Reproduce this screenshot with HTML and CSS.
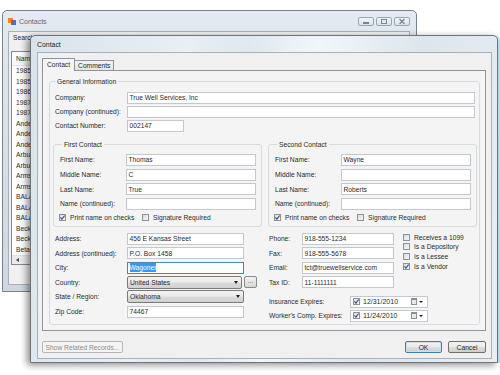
FILE: index.html
```html
<!DOCTYPE html>
<html lang="en">
<head>
  <meta charset="UTF-8" />
  <title>Contact</title>
  <link rel="stylesheet" href="styles.css">
</head>
<body>
<div class="desktop">

  <!-- list window behind the dialog -->
  <div class="window contacts-win">
    <div class="titlebar">
      <svg class="app-icon" viewBox="0 0 8 8" width="8" height="8">
        <rect x="0" y="1" width="5" height="5" fill="#e8892c"/>
        <rect x="3" y="3" width="5" height="5" fill="#3f78c4"/>
        <rect x="3" y="3" width="2" height="3" fill="#c44a3a"/>
      </svg>
      <span class="title">Contacts</span>
      <div class="caption-btns">
        <span class="cap-btn"><svg viewBox="0 0 16 9" width="16" height="9"><rect x="5" y="5" width="6" height="2" fill="#7b848d"/></svg></span>
        <span class="cap-btn"><svg viewBox="0 0 16 9" width="16" height="9"><rect x="5.5" y="2.5" width="5" height="4" fill="none" stroke="#7b848d"/></svg></span>
        <span class="cap-btn"><svg viewBox="0 0 16 9" width="16" height="9"><path d="M5.5 2 L10.5 7 M10.5 2 L5.5 7" stroke="#7b848d" stroke-width="1.3"/></svg></span>
      </div>
    </div>
    <div class="client">
      <div class="search-label">Search For:</div>
      <div class="listview">
        <div class="list-head">Name</div>
        <div class="list-row">1985 Ltd</div>
        <div class="list-row">1985 LP</div>
        <div class="list-row">1986 LP</div>
        <div class="list-row">1987 Ltd</div>
        <div class="list-row">1987 LP</div>
        <div class="list-row">Anders</div>
        <div class="list-row">Anderson</div>
        <div class="list-row">Andes</div>
        <div class="list-row">Arbuckle</div>
        <div class="list-row">Arbuck</div>
        <div class="list-row">Armstrong</div>
        <div class="list-row">Armst</div>
        <div class="list-row">BALAKO</div>
        <div class="list-row">BALAN</div>
        <div class="list-row">BALAR</div>
        <div class="list-row">Beckham</div>
        <div class="list-row">Beckley</div>
        <div class="list-row">Beta Oil</div>
        <div class="hscroll"><span class="scroll-arrow"></span></div>
      </div>
    </div>
  </div>

  <!-- contact dialog -->
  <div class="window dialog">
    <div class="titlebar">
      <span class="title">Contact</span>
    </div>
    <div class="client">
      <div class="tabs">
        <div class="tab active">Contact</div>
        <div class="tab">Comments</div>
      </div>

      <div class="tab-page">
        <div class="group general">
          <div class="caption">General Information</div>

          <div class="row">
            <span class="lbl gen">Company:</span>
            <div class="textbox w-full">True Well Services, Inc</div>
          </div>
          <div class="row">
            <span class="lbl gen">Company (continued):</span>
            <div class="textbox w-full"></div>
          </div>
          <div class="row">
            <span class="lbl gen">Contact Number:</span>
            <div class="textbox w-num">002147</div>
          </div>

          <div class="contact-groups">
            <div class="group person">
              <div class="caption">First Contact</div>
              <div class="row tall"><span class="lbl name">First Name:</span><div class="textbox w-name">Thomas</div></div>
              <div class="row tall"><span class="lbl name">Middle Name:</span><div class="textbox w-name">C</div></div>
              <div class="row tall"><span class="lbl name">Last Name:</span><div class="textbox w-name">True</div></div>
              <div class="row tall"><span class="lbl name">Name (continued):</span><div class="textbox w-name"></div></div>
              <div class="check-row">
                <span class="check print"><span class="box checked"><svg viewBox="0 0 7 7" width="7" height="7"><path d="M1.4 3.4 L2.9 5.2 L5.7 1.5" fill="none" stroke="#3b5597" stroke-width="1.2"/></svg></span>Print name on checks</span>
                <span class="check"><span class="box"></span>Signature Required</span>
              </div>
            </div>

            <div class="group person">
              <div class="caption">Second Contact</div>
              <div class="row tall"><span class="lbl name">First Name:</span><div class="textbox w-name">Wayne</div></div>
              <div class="row tall"><span class="lbl name">Middle Name:</span><div class="textbox w-name"></div></div>
              <div class="row tall"><span class="lbl name">Last Name:</span><div class="textbox w-name">Roberts</div></div>
              <div class="row tall"><span class="lbl name">Name (continued):</span><div class="textbox w-name"></div></div>
              <div class="check-row">
                <span class="check print"><span class="box checked"><svg viewBox="0 0 7 7" width="7" height="7"><path d="M1.4 3.4 L2.9 5.2 L5.7 1.5" fill="none" stroke="#3b5597" stroke-width="1.2"/></svg></span>Print name on checks</span>
                <span class="check"><span class="box"></span>Signature Required</span>
              </div>
            </div>
          </div>

          <div class="lower">
            <div class="address">
              <div class="row tall"><span class="lbl gen">Address:</span><div class="textbox w-addr">456 E Kansas Street</div></div>
              <div class="row tall"><span class="lbl gen">Address (continued):</span><div class="textbox w-addr">P.O. Box 1458</div></div>
              <div class="row tall"><span class="lbl gen">City:</span><div class="textbox w-addr focused"><span class="selected">Wagoner</span></div></div>
              <div class="row tall">
                <span class="lbl gen">Country:</span>
                <div class="combo w-country">United States<span class="drop"></span></div>
                <div class="dots">...</div>
              </div>
              <div class="row tall"><span class="lbl gen">State / Region:</span><div class="combo w-addr">Oklahoma<span class="drop"></span></div></div>
              <div class="row tall"><span class="lbl gen">Zip Code:</span><div class="textbox w-addr">74467</div></div>
            </div>

            <div class="side">
              <div class="phones">
                <div class="phone-fields">
                  <div class="row tall"><span class="lbl ph">Phone:</span><div class="textbox w-phone">918-555-1234</div></div>
                  <div class="row tall"><span class="lbl ph">Fax:</span><div class="textbox w-phone">918-555-5678</div></div>
                  <div class="row tall"><span class="lbl ph">Email:</span><div class="textbox w-phone">tct@truewellservice.com</div></div>
                  <div class="row tall"><span class="lbl ph">Tax ID:</span><div class="textbox w-phone">11-1111111</div></div>
                </div>
                <div class="flags">
                  <span class="check"><span class="box"></span>Receives a 1099</span>
                  <span class="check"><span class="box"></span>Is a Depository</span>
                  <span class="check"><span class="box"></span>Is a Lessee</span>
                  <span class="check"><span class="box checked"><svg viewBox="0 0 7 7" width="7" height="7"><path d="M1.4 3.4 L2.9 5.2 L5.7 1.5" fill="none" stroke="#3b5597" stroke-width="1.2"/></svg></span>Is a Vendor</span>
                </div>
              </div>

              <div class="dates">
                <div class="row">
                  <span class="lbl exp">Insurance Expires:</span>
                  <div class="datepick">
                    <span class="box checked"><svg viewBox="0 0 7 7" width="7" height="7"><path d="M1.4 3.4 L2.9 5.2 L5.7 1.5" fill="none" stroke="#3b5597" stroke-width="1.2"/></svg></span>
                    <span class="date">12/31/2010</span>
                    <span class="cal"></span><span class="drop"></span>
                  </div>
                </div>
                <div class="row">
                  <span class="lbl exp">Worker's Comp. Expires:</span>
                  <div class="datepick">
                    <span class="box checked"><svg viewBox="0 0 7 7" width="7" height="7"><path d="M1.4 3.4 L2.9 5.2 L5.7 1.5" fill="none" stroke="#3b5597" stroke-width="1.2"/></svg></span>
                    <span class="date">11/24/2010</span>
                    <span class="cal"></span><span class="drop"></span>
                  </div>
                </div>
              </div>
            </div>
          </div>
        </div>
      </div>

      <div class="footer">
        <button class="btn related" disabled>Show Related Records...</button>
        <div class="spacer"></div>
        <button class="btn ok">OK</button>
        <button class="btn cancel">Cancel</button>
      </div>
    </div>
  </div>

</div>
</body>
</html>
```

FILE: styles.css
```css
:root {
  --face: #f0f0f0;
  --page: #f4f4f4;
  --text: #2a2a2a;
  --field-border: #c3c8ce;
  --group-border: #d6dbe0;
}

body {
  margin: 0;
  background: #ffffff;
  font-family: 'Liberation Sans', Arial, sans-serif;
  font-size: 6.7px;
  color: var(--text);
}

.desktop {
  position: relative;
  width: 500px;
  height: 375px;
  overflow: hidden;
}

/* windows */
.window {
  position: absolute;
  box-sizing: border-box;
  display: flex;
  flex-direction: column;
  border: 1px solid #77828d;
  border-radius: 5px 5px 0 0;
}

.window .titlebar {
  display: flex;
  align-items: center;
  flex-shrink: 0;
}

.window .client {
  flex: 1;
  box-sizing: border-box;
  background: var(--face);
  border: 1px solid #a7b1bb;
}

/* Contacts (background) window */
.contacts-win {
  left: 2px;
  top: 10px;
  width: 415px;
  height: 282px;
  background: linear-gradient(180deg, #e3eaf1 0%, #d5dde6 60%, #cfd8e1 100%);
  padding: 0 6px 6px 5px;
}

.contacts-win .titlebar {
  height: 20px;
  gap: 3px;
}

.contacts-win .title {
  color: #5d6874;
  font-size: 7px;
}

.caption-btns {
  margin-left: auto;
  display: flex;
  gap: 2px;
  align-self: flex-start;
  margin-top: 6px;
}

.cap-btn {
  display: block;
  width: 16px;
  height: 9px;
  box-sizing: border-box;
  border: 1px solid #9aa5b0;
  border-radius: 2px;
  background: linear-gradient(180deg, #f1f4f7, #dde3e9);
  overflow: hidden;
}

.cap-btn svg {
  display: block;
  margin: -1px 0 0 -1px;
}

.contacts-win .client {
  padding: 2px 0 0 2px;
}

.search-label {
  margin-left: 2px;
  line-height: 8px;
}

.listview {
  margin-top: 9px;
  width: 300px;
  background: #ffffff;
  border: 1px solid #828790;
}

.list-head {
  height: 13px;
  line-height: 13px;
  padding-left: 4px;
  border-bottom: 1px solid #e3e6ea;
  background: linear-gradient(180deg, #ffffff, #f3f4f6);
}

.list-row {
  height: 10.5px;
  line-height: 10.5px;
  padding-left: 4px;
}

.hscroll {
  height: 8px;
  background: #eaeaea;
  border-top: 1px solid #e0e0e0;
  display: flex;
  align-items: center;
  padding-left: 4px;
}

.scroll-arrow {
  width: 0;
  height: 0;
  border-right: 3px solid #444;
  border-top: 2px solid transparent;
  border-bottom: 2px solid transparent;
}

/* Contact dialog */
.dialog {
  left: 30px;
  top: 35px;
  width: 468px;
  height: 328px;
  padding: 0 5px 5px 6px;
  border-color: #6b747d;
  background: linear-gradient(100deg, #d9e3eb 0%, #e9eff3 30%, #dfe8ee 42%, #f2f6f8 55%, #dde6ec 75%, #e9eef1 100%);
  box-shadow: -3px 2px 7px rgba(0, 0, 0, 0.45), 2px 0 0 #b9ecf6;
}

.dialog .titlebar {
  height: 16px;
}

.dialog .title {
  font-size: 6.9px;
  color: #1d1d1d;
}

.dialog .client {
  padding: 5px 5px 5px 4px;
  display: flex;
  flex-direction: column;
}

/* tabs */
.tabs {
  display: flex;
  align-items: flex-end;
  height: 12px;
  position: relative;
  z-index: 1;
}

.tab {
  height: 10px;
  line-height: 9px;
  padding: 0 3px;
  box-sizing: border-box;
  border: 1px solid #8e939a;
  border-bottom: none;
  background: linear-gradient(180deg, #f3f3f3, #e4e4e4);
}

.tab.active {
  height: 13px;
  line-height: 12px;
  margin-bottom: -1px;
  padding: 0 4px;
  background: var(--page);
}

.tab + .tab {
  border-left: none;
}

.tab-page {
  height: 261px;
  box-sizing: border-box;
  border: 1px solid #8e939a;
  background: var(--page);
  padding: 10px 5px 0 6px;
}

/* group boxes */
.group {
  border: 1px solid var(--group-border);
  border-radius: 3px;
  box-sizing: border-box;
}

.caption {
  display: table;
  line-height: 8px;
  margin: -4.5px 0 0 2px;
  padding: 0 2px;
  background: var(--page);
}

.general {
  padding: 0 4px 5px 3px;
}

.general > .caption {
  margin-bottom: 5px;
}

.row {
  display: flex;
  align-items: center;
  height: 14px;
}

.row.tall {
  height: 14.6px;
}

.lbl {
  flex-shrink: 0;
  white-space: nowrap;
}

.lbl.gen { width: 72px; margin-left: 2px; }
.lbl.name { width: 66px; }
.lbl.ph { width: 33px; }
.lbl.exp { width: 81px; }

.textbox {
  height: 12px;
  box-sizing: border-box;
  border: 1px solid var(--field-border);
  background: #ffffff;
  padding-left: 1.5px;
  display: flex;
  align-items: center;
  white-space: nowrap;
  overflow: hidden;
}

.textbox.focused {
  border-color: #4d87b8;
}

.selected {
  background: #3399ff;
  color: #ffffff;
  line-height: 9px;
}

.w-full { width: 349px; }
.w-num { width: 57px; }
.w-name { width: 130px; }
.w-addr { width: 117px; }
.w-country { width: 115px; }
.w-phone { width: 92px; }

.contact-groups {
  display: flex;
  gap: 6px;
  margin-top: 11.5px;
}

.person {
  width: 209px;
  padding: 0 5px 3px 6px;
}

.person > .caption {
  margin-bottom: 4.2px;
}

.check-row {
  display: flex;
  align-items: center;
  height: 12px;
  margin-left: -1px;
}

.check {
  display: flex;
  align-items: center;
  gap: 4px;
  white-space: nowrap;
}

.check.print {
  width: 83px;
}

.box {
  display: block;
  flex-shrink: 0;
  width: 7px;
  height: 7px;
  box-sizing: border-box;
  border: 1px solid #8f9296;
  background: linear-gradient(135deg, #d9dbde, #f7f7f7);
  overflow: hidden;
}

.box svg {
  display: block;
  margin: -1px 0 0 -1px;
}

/* address / phone section */
.lower {
  display: flex;
  height: 87.6px;
  margin-top: 4.2px;
}

.address {
  width: 216px;
}

.combo {
  position: relative;
  height: 13px;
  box-sizing: border-box;
  border: 1px solid #7a7a7a;
  border-radius: 2px;
  background: linear-gradient(180deg, #f3f3f3 0%, #ebebeb 48%, #dcdcdc 52%, #d0d0d0 100%);
  padding-left: 2px;
  display: flex;
  align-items: center;
}

.drop {
  width: 0;
  height: 0;
  border-top: 3px solid #1e1e1e;
  border-left: 2.5px solid transparent;
  border-right: 2.5px solid transparent;
}

.combo .drop {
  margin-left: auto;
  margin-right: 3px;
}

.dots {
  width: 13px;
  height: 12px;
  box-sizing: border-box;
  margin-left: 2px;
  border: 1px solid #8a8a8a;
  border-radius: 2px;
  background: linear-gradient(180deg, #f3f3f3, #d6d6d6);
  text-align: center;
  line-height: 8px;
  color: #555;
}

.side {
  display: flex;
  flex-direction: column;
}

.phones {
  display: flex;
}

.flags {
  margin-left: 9px;
  margin-top: 1px;
  display: flex;
  flex-direction: column;
}

.flags .check {
  height: 9.7px;
}

.dates {
  margin-top: 4.9px;
}

.datepick {
  width: 78px;
  height: 12px;
  box-sizing: border-box;
  border: 1px solid var(--field-border);
  background: #ffffff;
  display: flex;
  align-items: center;
  padding-left: 2px;
}

.datepick .date {
  margin-left: 3px;
  font-size: 7px;
}

.cal {
  margin-left: auto;
  width: 6px;
  height: 7px;
  box-sizing: border-box;
  border: 1px solid #8c9096;
  border-top-width: 2px;
  background: #e6e8ea;
}

.datepick .drop {
  margin: 0 4px 0 2px;
  border-top-width: 2.5px;
  border-left-width: 2px;
  border-right-width: 2px;
}

/* footer buttons */
.footer {
  display: flex;
  margin-top: 10px;
  gap: 6px;
}

.spacer {
  flex: 1;
}

.btn {
  height: 12px;
  box-sizing: border-box;
  padding: 0;
  font-family: inherit;
  font-size: 6.7px;
  color: var(--text);
  border: 1px solid #707070;
  border-radius: 2px;
  background: linear-gradient(180deg, #f2f2f2 0%, #ebebeb 48%, #dddddd 52%, #cfcfcf 100%);
}

.btn.related {
  width: 81px;
  color: #8d8d8d;
  border-color: #b3b7ba;
  background: #f4f4f4;
}

.btn.ok {
  width: 37px;
  border-color: #3c7fb1;
  box-shadow: inset 0 0 0 1px #c3e2f6;
}

.btn.cancel {
  width: 38px;
}
```
